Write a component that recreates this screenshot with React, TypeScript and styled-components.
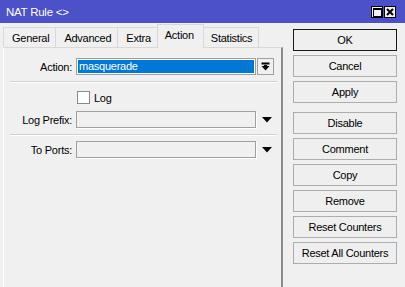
import React from "react";
import styled, { createGlobalStyle } from "styled-components";

const Global = createGlobalStyle`
  html, body { margin: 0; padding: 0; background: #f0f0f0; }
  body { font-family: "Liberation Sans", Arial, sans-serif; font-size: 11px; letter-spacing: -0.25px; color: #000; }
  * { box-sizing: border-box; }
`;

const Window = styled.div`
  width: 405px;
  height: 287px;
  display: flex;
  flex-direction: column;
  overflow: hidden;
  background: #f0f0f0;
`;

const TitleBar = styled.div`
  height: 23px;
  flex: none;
  background: #4c50c9;
  color: #fff;
  display: flex;
  align-items: center;
  justify-content: space-between;
  padding: 0 9px 0 6px;
  font-size: 11.5px;
`;

const TitleButtons = styled.div`
  display: flex;
  gap: 1px;
  padding-top: 1px;
`;

const TitleButton = styled.div`
  width: 12px;
  height: 12px;
  border: 1px solid #000;
  background: #f0f0f0;
  display: flex;
  align-items: center;
  justify-content: center;
`;

const Body = styled.div`
  flex: 1;
  display: flex;
  align-items: stretch;
  min-height: 0;
`;

const LeftColumn = styled.div`
  width: 283px;
  padding: 1px 0 0 3px;
  display: flex;
  flex-direction: column;
`;

const TabStrip = styled.div`
  height: 23px;
  display: flex;
  align-items: flex-end;
  padding-left: 0;
  position: relative;
  z-index: 1;
`;

const Tab = styled.div<{ $active?: boolean }>`
  height: ${(p) => (p.$active ? 24 : 20)}px;
  padding: ${(p) => (p.$active ? "0 9px 0 7px" : "0 6px 0 8px")};
  margin: ${(p) => (p.$active ? "0 -1px -1px -1px" : "0")};
  border: 1px solid #d9d9d9;
  border-bottom: none;
  margin-left: ${(p) => (p.$active ? "-1px" : "-1px")};
  &:first-child { margin-left: 0; }
  background: ${(p) => (p.$active ? "#f0f0f0" : "#f0f0f0")};
  display: flex;
  align-items: ${(p) => (p.$active ? "flex-start" : "center")};
  padding-top: ${(p) => (p.$active ? "4px" : "0")};
  position: relative;
  z-index: ${(p) => (p.$active ? 2 : 0)};
`;

const Panel = styled.div`
  flex: 1;
  border-top: 1px solid #d9d9d9;
  border-left: 1px solid #ffffff;
  border-right: 2px solid #8c8c8c;
  display: flex;
  flex-direction: column;
  padding-top: 10px;
`;

const Row = styled.div<{ $h?: number; $mt?: number }>`
  display: flex;
  align-items: center;
  height: ${(p) => p.$h ?? 17}px;
  margin-top: ${(p) => p.$mt ?? 0}px;
`;

const Label = styled.div`
  width: 69px;
  text-align: right;
  padding-right: 1px;
  margin-right: 3px;
  flex: none;
`;

const SelectField = styled.div`
  width: 180px;
  height: 17px;
  border: 1px solid #a0a0a0;
  padding: 1px;
  background: #fff;
  display: flex;
`;

const Selected = styled.div`
  flex: 1;
  background: #0078d7;
  color: #fff;
  display: flex;
  align-items: center;
  padding-left: 1px;
  line-height: 13px;
`;

const DropButton = styled.div`
  width: 17px;
  height: 17px;
  margin-left: 1px;
  border: 1px solid #a0a0a0;
  background: #f0f0f0;
  display: flex;
  align-items: center;
  justify-content: center;
`;

const InputField = styled.div`
  width: 180px;
  height: 17px;
  border: 1px solid #a0a0a0;
  background: #f0f0f0;
  box-shadow: 1px 1px 0 #ffffff;
`;

const ArrowSlot = styled.div`
  width: 21px;
  display: flex;
  justify-content: center;
  align-items: center;
`;

const Separator = styled.div<{ $mt: number }>`
  height: 1px;
  background: #d0d0d0;
  border-bottom: 1px solid #ffffff;
  box-sizing: content-box;
  margin: ${(p) => p.$mt}px 4px 0 6px;
`;

const Check = styled.div`
  width: 13px;
  height: 13px;
  border: 1px solid #8a8a8a;
  background: #fff;
  margin-left: 73px;
  margin-right: 4px;
`;

const RightColumn = styled.div`
  margin-left: 10px;
  padding-top: 6px;
  display: flex;
  flex-direction: column;
`;

const Button = styled.div<{ $default?: boolean; $gapBefore?: number }>`
  width: 104px;
  height: 22px;
  margin-top: ${(p) => p.$gapBefore ?? 4}px;
  border: 1px solid ${(p) => (p.$default ? "#1a1a1a" : "#adadad")};
  background: #efefef;
  display: flex;
  align-items: center;
  justify-content: center;
  &:first-child { margin-top: 0; }
`;

const DownTriangle = () => (
  <svg width="10" height="6" viewBox="0 0 10 6">
    <path d="M0 0 H10 L5 5.5 Z" fill="#000" />
  </svg>
);

const BarArrow = () => (
  <svg width="9" height="10" viewBox="0 0 9 10">
    <rect x="0.5" y="0.5" width="8" height="2" fill="#000" />
    <path d="M0.5 4 H8.5 L4.5 8.5 Z" fill="#000" />
    <rect x="3" y="3" width="3" height="2" fill="#000" />
  </svg>
);

const tabs = ["General", "Advanced", "Extra", "Action", "Statistics"];
const buttons: { label: string; def?: boolean; gap?: number }[] = [
  { label: "OK", def: true },
  { label: "Cancel" },
  { label: "Apply" },
  { label: "Disable", gap: 9 },
  { label: "Comment" },
  { label: "Copy" },
  { label: "Remove" },
  { label: "Reset Counters" },
  { label: "Reset All Counters" },
];

export default function App() {
  return (
    <>
      <Global />
      <Window>
        <TitleBar>
          <span>NAT Rule &lt;&gt;</span>
          <TitleButtons>
            <TitleButton>
              <svg width="9" height="9" viewBox="0 0 9 9">
                <rect x="0.5" y="0.5" width="8" height="8" fill="none" stroke="#000" />
                <rect x="0.5" y="0.5" width="8" height="1.5" fill="#000" />
              </svg>
            </TitleButton>
            <TitleButton>
              <svg width="8" height="8" viewBox="0 0 8 8">
                <path d="M1 1 L7 7 M7 1 L1 7" stroke="#000" strokeWidth="2" />
              </svg>
            </TitleButton>
          </TitleButtons>
        </TitleBar>
        <Body>
          <LeftColumn>
            <TabStrip>
              {tabs.map((t) => (
                <Tab key={t} $active={t === "Action"}>
                  {t}
                </Tab>
              ))}
            </TabStrip>
            <Panel>
              <Row>
                <Label>Action:</Label>
                <SelectField>
                  <Selected>masquerade</Selected>
                </SelectField>
                <DropButton>
                  <BarArrow />
                </DropButton>
              </Row>
              <Separator $mt={6} />
              <Row $h={13} $mt={8}>
                <Check />
                <span>Log</span>
              </Row>
              <Row $mt={7}>
                <Label>Log Prefix:</Label>
                <InputField />
                <ArrowSlot>
                  <DownTriangle />
                </ArrowSlot>
              </Row>
              <Separator $mt={6} />
              <Row $mt={5}>
                <Label>To Ports:</Label>
                <InputField />
                <ArrowSlot>
                  <DownTriangle />
                </ArrowSlot>
              </Row>
            </Panel>
          </LeftColumn>
          <RightColumn>
            {buttons.map((b) => (
              <Button key={b.label} $default={b.def} $gapBefore={b.gap}>
                {b.label}
              </Button>
            ))}
          </RightColumn>
        </Body>
      </Window>
    </>
  );
}
